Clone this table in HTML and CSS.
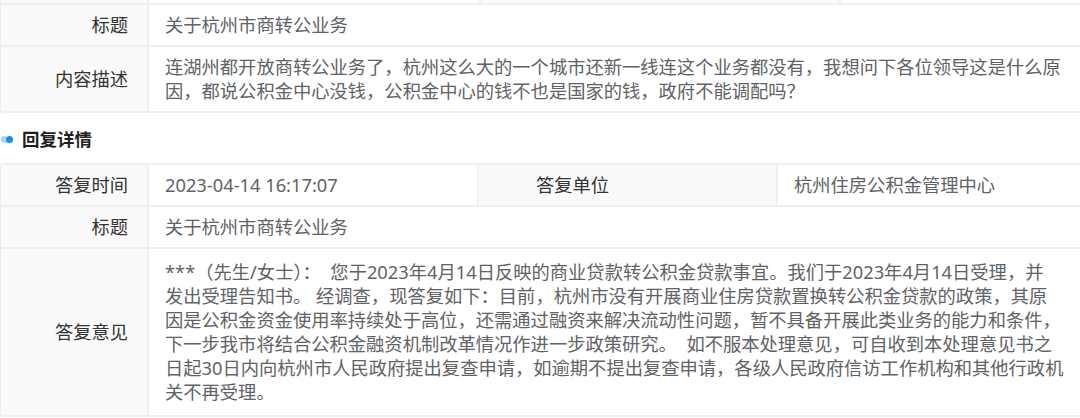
FILE: index.html
```html
<!DOCTYPE html>
<html lang="zh-CN">
<head>
<meta charset="utf-8">
<link rel="stylesheet" href="styles.css">
</head>
<body>
<div class="page">
  <div class="desc desc-top">
    <div class="cell label stub"></div>
    <div class="cell value stub"></div>
    <div class="cell label stub"></div>
    <div class="cell value stub last"></div>

    <div class="cell label">标题</div>
    <div class="cell value span3 last">关于杭州市商转公业务</div>

    <div class="cell label">内容描述</div>
    <div class="cell value span3 last">连湖州都开放商转公业务了，杭州这么大的一个城市还新一线连这个业务都没有，我想问下各位领导这是什么原因，都说公积金中心没钱，公积金中心的钱不也是国家的钱，政府不能调配吗？</div>
  </div>

  <div class="section-title">
    <span class="dot"></span>
    <span class="title-text">回复详情</span>
  </div>

  <div class="desc desc-reply">
    <div class="cell label">答复时间</div>
    <div class="cell value">2023-04-14 16:17:07</div>
    <div class="cell label label-mid">答复单位</div>
    <div class="cell value last">杭州住房公积金管理中心</div>

    <div class="cell label">标题</div>
    <div class="cell value span3 last">关于杭州市商转公业务</div>

    <div class="cell label">答复意见</div>
    <div class="cell value span3 last reply">
      <div class="reply-text">***（先生/女士）：&nbsp; 您于2023年4月14日反映的商业贷款转公积金贷款事宜。我们于2023年4月14日受理，并<br>发出受理告知书。 经调查，现答复如下：目前，杭州市没有开展商业住房贷款置换转公积金贷款的政策，其原<br>因是公积金资金使用率持续处于高位，还需通过融资来解决流动性问题，暂不具备开展此类业务的能力和条件，<br>下一步我市将结合公积金融资机制改革情况作进一步政策研究。&nbsp; 如不服本处理意见，可自收到本处理意见书之<br>日起30日内向杭州市人民政府提出复查申请，如逾期不提出复查申请，各级人民政府信访工作机构和其他行政机<br>关不再受理。</div>
    </div>
  </div>
</div>
</body>
</html>
```

FILE: styles.css
```css
* { box-sizing: border-box; }

html, body {
  margin: 0;
  padding: 0;
  background: #ffffff;
}

body {
  font-family: "Noto Sans", "Noto Sans CJK SC", sans-serif;
  font-size: 18.3px;
  line-height: 24px;
  color: #606266;
  width: 1080px;
  height: 418px;
  overflow: hidden;
}

.page {
  width: 1080px;
}

.desc {
  display: grid;
  border-left: 1px solid #ececec;
  border-bottom: 2px solid #efefef;
  border-radius: 0 0 0 3px;
}

.desc-top {
  grid-template-columns: 148px 332px 360px 1fr;
}

.desc-reply {
  grid-template-columns: 148px 330px 299px 1fr;
  border-top: 2px solid #efefef;
  border-radius: 3px 0 0 3px;
}

.cell {
  padding: 8px 8px 8px 16px;
  border-right: 2px solid #efefef;
  border-bottom: 2px solid #efefef;
  display: flex;
  align-items: center;
}

.desc > .cell:nth-last-child(-n+2) {
  border-bottom: none;
}

.cell.last {
  border-right: none;
}

.label {
  background: #fafafa;
  color: #333333;
  justify-content: flex-end;
  padding-right: 19px;
}

.label-mid {
  justify-content: flex-start;
  padding-left: 57px;
}

.value {
  background: #ffffff;
}

.span3 {
  grid-column: span 3;
}

.stub {
  height: 5px;
  padding: 0;
}

.reply {
  padding: 11px 2px 11px 16px;
}

.reply-text {
  white-space: nowrap;
}

.section-title {
  height: 50px;
  display: flex;
  align-items: center;
  padding-top: 2px;
}

.dot {
  width: 7px;
  height: 7px;
  border-radius: 50%;
  background: #1a8cf5;
  box-shadow: -5px 0 0 0 #a9d4fb;
  margin-left: 6px;
  margin-right: 9px;
}

.title-text {
  font-weight: 700;
  font-size: 17.5px;
  color: #1f1f1f;
}
```
